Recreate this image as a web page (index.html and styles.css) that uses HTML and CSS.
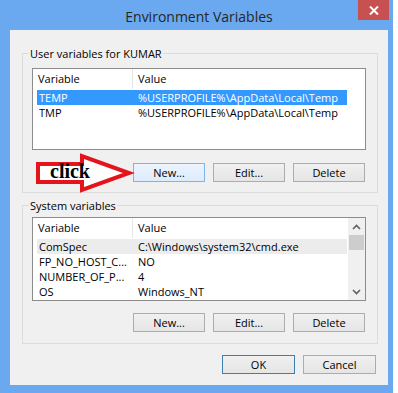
FILE: index.html
```html
<!DOCTYPE html>
<html>
<head>
<meta charset="utf-8">
<title>Environment Variables</title>
<link rel="stylesheet" href="styles.css">
</head>
<body>
<div class="window">
  <div class="titlebar">
    <span></span>
    <div class="title">Environment Variables</div>
    <div class="close"><svg width="10" height="9" viewBox="0 0 10 9"><path d="M1 0.5 L9 8.5 M9 0.5 L1 8.5" stroke="#fff" stroke-width="2" fill="none"/></svg></div>
  </div>
  <div class="client">
    <div class="group g1">
      <div class="legend">User variables for KUMAR</div>
      <div class="list l1">
        <div class="lbody">
          <div class="lhead"><div class="c1">Variable</div><div class="c2">Value</div></div>
          <div class="row sel"><div class="c1">TEMP</div><div class="c2">%USERPROFILE%\AppData\Local\Temp</div></div>
          <div class="row"><div class="c1">TMP</div><div class="c2">%USERPROFILE%\AppData\Local\Temp</div></div>
        </div>
      </div>
      <div class="btns">
        <button class="btn focus">New...</button>
        <button class="btn">Edit...</button>
        <button class="btn">Delete</button>
      </div>
    </div>
    <div class="group g2">
      <div class="legend">System variables</div>
      <div class="list l2">
        <div class="lbody">
          <div class="lhead"><div class="c1">Variable</div><div class="c2">Value</div></div>
          <div class="row soft"><div class="c1">ComSpec</div><div class="c2">C:\Windows\system32\cmd.exe</div></div>
          <div class="row"><div class="c1">FP_NO_HOST_C...</div><div class="c2">NO</div></div>
          <div class="row"><div class="c1">NUMBER_OF_P...</div><div class="c2">4</div></div>
          <div class="row"><div class="c1">OS</div><div class="c2">Windows_NT</div></div>
        </div>
        <div class="vscroll">
          <div class="sarrow"><svg width="9" height="6" viewBox="0 0 9 6"><path d="M1 5 L4.5 1.5 L8 5" stroke="#606060" stroke-width="1.6" fill="none"/></svg></div>
          <div class="thumb"></div>
          <div class="strack"></div>
          <div class="sarrow"><svg width="9" height="6" viewBox="0 0 9 6"><path d="M1 1 L4.5 4.5 L8 1" stroke="#606060" stroke-width="1.6" fill="none"/></svg></div>
        </div>
      </div>
      <div class="btns">
        <button class="btn">New...</button>
        <button class="btn">Edit...</button>
        <button class="btn">Delete</button>
      </div>
    </div>
    <div class="footer">
      <button class="btn default">OK</button>
      <button class="btn">Cancel</button>
    </div>
  </div>
  <svg class="annot" width="398" height="393" viewBox="0 0 398 393">
    <polygon points="38,164 82,164 82,156 129,173 82,190 82,182 38,182" fill="#ffffff" stroke="#e3141c" stroke-width="4" stroke-linejoin="miter"/>
    <text x="50" y="178" class="clicktext">click</text>
  </svg>
</div>
</body>
</html>
```

FILE: styles.css
```css
html, body {
  margin: 0;
  padding: 0;
  background: #ffffff;
}

body {
  font-family: "Open Sans", "Noto Sans", "DejaVu Sans", sans-serif;
  font-size: 11px;
  color: #000;
}

.window {
  width: 393px;
  height: 393px;
  box-sizing: border-box;
  background: #6aa9f0;
  padding: 0 5px 8px 10px;
  position: relative;
  display: flex;
  flex-direction: column;
}

.titlebar {
  height: 30px;
  flex: none;
  display: grid;
  grid-template-columns: 1fr auto 1fr;
}

.title {
  font-size: 14px;
  line-height: 18px;
  padding-top: 8px;
  color: #262626;
  white-space: nowrap;
}

.close {
  justify-self: end;
  width: 31px;
  height: 20px;
  margin-right: -1px;
  background: #c75050;
  display: flex;
  align-items: center;
  justify-content: center;
}

.close svg {
  display: block;
}

.client {
  flex: 1;
  background: #f0f0f0;
  padding: 23px 10px 0 12px;
  display: flex;
  flex-direction: column;
}

.group {
  border: 1px solid #dcdcdc;
  display: flex;
  flex-direction: column;
}

.g2 {
  margin-top: 12px;
}

.legend {
  align-self: flex-start;
  margin-top: -8px;
  margin-left: 6px;
  padding: 0 1px;
  line-height: 15px;
  background: #f0f0f0;
  color: #000;
}

.list {
  margin-left: 9px;
  margin-right: 11px;
  border: 1px solid #8c8c8c;
  background: #fff;
  display: flex;
  box-sizing: border-box;
}

.l1 {
  margin-top: 7px;
  height: 82px;
}

.l2 {
  margin-top: 4px;
  height: 84px;
}

.lbody {
  flex: 1;
  min-width: 0;
}

.lhead {
  height: 20px;
  display: flex;
  align-items: center;
  margin-bottom: 1px;
}

.lhead .c1 {
  width: 94px;
  padding-left: 5px;
  border-right: 1px solid #e5e5e5;
  height: 20px;
  line-height: 20px;
}

.lhead .c2 {
  padding-left: 5px;
  line-height: 20px;
}

.row {
  margin-left: 4px;
  width: 310px;
  height: 15px;
  line-height: 15px;
  display: flex;
  white-space: nowrap;
}

.row .c1 {
  width: 98px;
  padding-left: 2px;
  overflow: hidden;
}

.row .c2 {
  padding-left: 1px;
}

.row.sel {
  background: #3399ff;
  color: #fff;
}

.row.soft {
  background: #ececec;
}

.vscroll {
  width: 17px;
  flex: none;
  background: #f0f0f0;
  display: flex;
  flex-direction: column;
}

.sarrow {
  height: 17px;
  display: flex;
  align-items: center;
  justify-content: center;
}

.sarrow svg {
  display: block;
}

.thumb {
  height: 15px;
  margin: 0 1px;
  background: #cdcdcd;
}

.strack {
  flex: 1;
}

.btns {
  display: flex;
  justify-content: flex-end;
  gap: 8px;
  margin-right: 12px;
}

.g1 .btns {
  margin-top: 13px;
  margin-bottom: 10px;
}

.g2 .btns {
  margin-top: 12px;
  margin-bottom: 11px;
}

.btn {
  width: 72px;
  height: 19px;
  box-sizing: border-box;
  border: 1px solid #acacac;
  background: linear-gradient(#f0f0f0, #e5e5e5);
  font-family: inherit;
  font-size: 11px;
  color: #000;
  padding: 0;
  line-height: 17px;
}

.btn.focus {
  border-color: #7eb4ea;
  background: linear-gradient(#ecf4fc, #dcecfc);
}

.btn.default {
  border-color: #3c7fb1;
}

.footer {
  display: flex;
  justify-content: flex-end;
  gap: 8px;
  margin-top: 11px;
  margin-right: 2px;
}

.footer .btn {
  width: 73px;
}

.annot {
  position: absolute;
  left: 0;
  top: 0;
  pointer-events: none;
}

.clicktext {
  font-family: "Liberation Serif", "Times New Roman", serif;
  font-weight: bold;
  font-size: 20px;
  fill: #000;
}
```
